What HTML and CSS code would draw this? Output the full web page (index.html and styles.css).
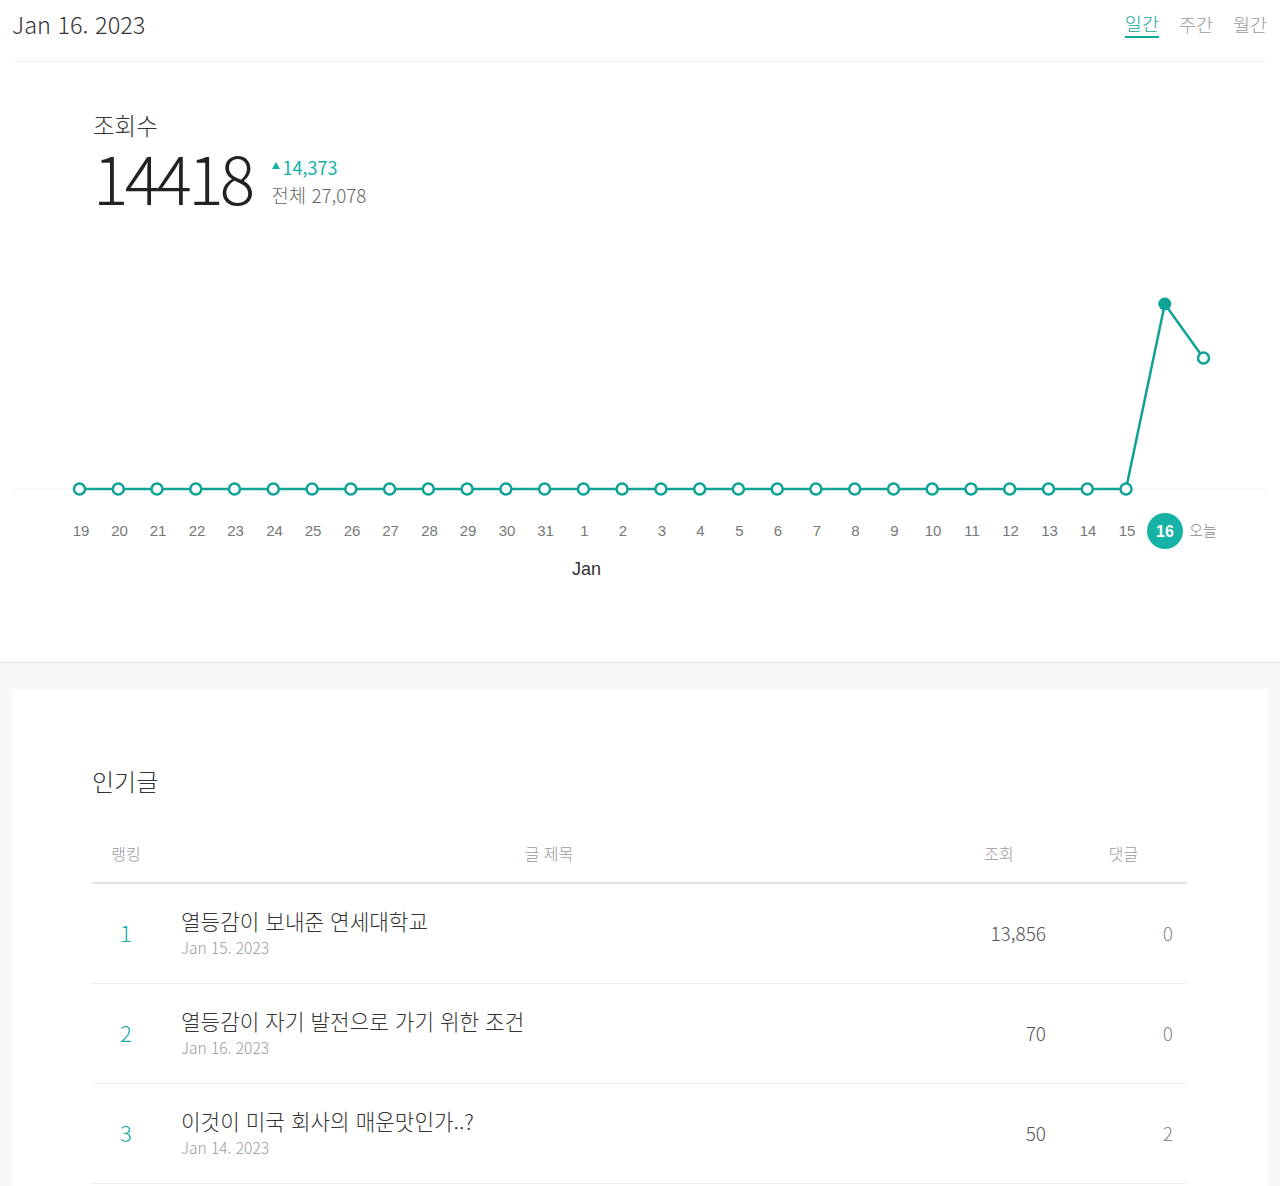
FILE: index.html
```html
<!DOCTYPE html>
<html lang="ko">
<head>
<meta charset="utf-8">
<title>통계</title>
<link rel="stylesheet" href="styles.css">
</head>
<body>
<header class="top">
  <h1 class="date">Jan 16. 2023</h1>
  <nav class="tabs">
    <a class="tab active">일간</a>
    <a class="tab">주간</a>
    <a class="tab">월간</a>
  </nav>
</header>

<section class="visits">
  <div class="stat">
    <div class="stat-label">조회수</div>
    <div class="stat-row">
      <div class="stat-num">14418</div>
      <div class="stat-side">
        <div class="delta"><span class="tri"></span>14,373</div>
        <div class="total">전체 27,078</div>
      </div>
    </div>
  </div>
  <svg class="chart" width="1280" height="320" viewBox="0 0 1280 320">
    <line x1="12" y1="209" x2="1268" y2="209" stroke="#f2f2f2" stroke-width="1"/>
    <polyline fill="none" stroke="#0fa396" stroke-width="2.5" points="79.5,209 1126,209 1164.8,24 1203.5,78"/>
    <g fill="#fff" stroke="#0fa396" stroke-width="2.5">
      <circle cx="79.5" cy="209" r="5.5"/><circle cx="118.3" cy="209" r="5.5"/><circle cx="157" cy="209" r="5.5"/>
      <circle cx="195.8" cy="209" r="5.5"/><circle cx="234.5" cy="209" r="5.5"/><circle cx="273.3" cy="209" r="5.5"/>
      <circle cx="312.1" cy="209" r="5.5"/><circle cx="350.8" cy="209" r="5.5"/><circle cx="389.6" cy="209" r="5.5"/>
      <circle cx="428.3" cy="209" r="5.5"/><circle cx="467.1" cy="209" r="5.5"/><circle cx="505.9" cy="209" r="5.5"/>
      <circle cx="544.6" cy="209" r="5.5"/><circle cx="583.4" cy="209" r="5.5"/><circle cx="622.1" cy="209" r="5.5"/>
      <circle cx="660.9" cy="209" r="5.5"/><circle cx="699.7" cy="209" r="5.5"/><circle cx="738.4" cy="209" r="5.5"/>
      <circle cx="777.2" cy="209" r="5.5"/><circle cx="815.9" cy="209" r="5.5"/><circle cx="854.7" cy="209" r="5.5"/>
      <circle cx="893.5" cy="209" r="5.5"/><circle cx="932.2" cy="209" r="5.5"/><circle cx="971" cy="209" r="5.5"/>
      <circle cx="1009.7" cy="209" r="5.5"/><circle cx="1048.5" cy="209" r="5.5"/><circle cx="1087.3" cy="209" r="5.5"/>
      <circle cx="1126" cy="209" r="5.5"/>
      <circle cx="1203.5" cy="78" r="5.5"/>
    </g>
    <circle cx="1164.8" cy="24" r="6.5" fill="#0fa396"/>
    <g class="axis" text-anchor="middle">
      <text x="81" y="256">19</text><text x="119.5" y="256">20</text><text x="158" y="256">21</text>
      <text x="197" y="256">22</text><text x="235.5" y="256">23</text><text x="274.5" y="256">24</text>
      <text x="313" y="256">25</text><text x="352" y="256">26</text><text x="390.5" y="256">27</text>
      <text x="429.5" y="256">28</text><text x="468" y="256">29</text><text x="507" y="256">30</text>
      <text x="545.5" y="256">31</text><text x="584.5" y="256">1</text><text x="623" y="256">2</text>
      <text x="662" y="256">3</text><text x="700.5" y="256">4</text><text x="739.5" y="256">5</text>
      <text x="778" y="256">6</text><text x="817" y="256">7</text><text x="855.5" y="256">8</text>
      <text x="894.5" y="256">9</text><text x="933" y="256">10</text><text x="972" y="256">11</text>
      <text x="1010.5" y="256">12</text><text x="1049.5" y="256">13</text><text x="1088" y="256">14</text>
      <text x="1127" y="256">15</text>
    </g>
    <circle cx="1165" cy="251" r="18" fill="#17b2a6"/>
    <text class="axis-today-num" x="1165" y="256.5" text-anchor="middle">16</text>
    <text class="axis-today" x="1203" y="256" text-anchor="middle">오늘</text>
    <text class="axis-month" x="586.5" y="295" text-anchor="middle">Jan</text>
  </svg>
</section>

<main class="lower">
  <section class="card">
    <h2 class="card-title">인기글</h2>
    <div class="table">
      <div class="row head">
        <div class="c-rank">랭킹</div>
        <div class="c-head-title">글 제목</div>
        <div class="c-views">조회</div>
        <div class="c-comm">댓글</div>
      </div>
      <div class="row">
        <div class="c-rank rank">1</div>
        <div class="c-title">
          <div class="post">열등감이 보내준 연세대학교</div>
          <div class="post-date">Jan 15. 2023</div>
        </div>
        <div class="c-views num">13,856</div>
        <div class="c-comm num light">0</div>
      </div>
      <div class="row">
        <div class="c-rank rank">2</div>
        <div class="c-title">
          <div class="post">열등감이 자기 발전으로 가기 위한 조건</div>
          <div class="post-date">Jan 16. 2023</div>
        </div>
        <div class="c-views num">70</div>
        <div class="c-comm num light">0</div>
      </div>
      <div class="row">
        <div class="c-rank rank">3</div>
        <div class="c-title">
          <div class="post">이것이 미국 회사의 매운맛인가..?</div>
          <div class="post-date">Jan 14. 2023</div>
        </div>
        <div class="c-views num">50</div>
        <div class="c-comm num light">2</div>
      </div>
    </div>
  </section>
</main>
</body>
</html>
```
FILE: styles.css
```css
* { box-sizing: border-box; }
html, body {
  margin: 0;
  padding: 0;
  background: #f7f7f7;
}
body {
  font-family: "Noto Sans CJK KR", "Noto Sans", sans-serif;
  font-weight: 300;
  color: #333;
}

.top {
  height: 62px;
  padding: 0 12px;
  display: flex;
  justify-content: space-between;
  align-items: flex-start;
  background: #fff;
  position: relative;
}
.top::after {
  content: "";
  position: absolute;
  left: 12px; right: 12px; bottom: 0;
  height: 1px;
  background: #f2f2f2;
}
.date {
  margin: 0;
  padding-top: 7px;
  font-size: 23.5px;
  line-height: 34px;
  font-weight: 300;
  color: #333;
}
.tabs {
  display: flex;
  gap: 20px;
  padding-top: 11px;
  padding-right: 1px;
}
.tab {
  font-size: 18.5px;
  line-height: 26px;
  color: #999;
  font-weight: 300;
}
.tab.active {
  color: #0fa99c;
  border-bottom: 2px solid #0fa99c;
  line-height: 25px;
}

.visits {
  background: #fff;
  border-bottom: 1px solid #e6e6e6;
  padding-top: 49px;
  padding-bottom: 62px;
}
.stat {
  margin-left: 93px;
  height: 169px;
}
.stat-label {
  font-size: 23.5px;
  line-height: 28px;
  color: #333;
}
.stat-row {
  display: flex;
  gap: 20px;
  margin-top: 4px;
}
.stat-num {
  font-size: 66px;
  line-height: 66px;
  font-weight: 300;
  color: #222;
  letter-spacing: -3.6px;
}
.stat-side {
  padding-top: 10px;
  font-size: 18.8px;
  line-height: 28px;
}
.delta {
  color: #11b1a4;
  font-weight: 400;
  font-size: 18px;
  display: flex;
  align-items: center;
  gap: 3px;
}
.tri {
  width: 0; height: 0;
  border-left: 4px solid transparent;
  border-right: 4px solid transparent;
  border-bottom: 7px solid #11b1a4;
  margin-top: -4px;
}
.total { color: #666; }

.chart { display: block; }
.axis text {
  font-family: "Liberation Sans", Arial, sans-serif;
  font-size: 15px;
  fill: #777;
}
.axis-today-num {
  font-family: "Liberation Sans", Arial, sans-serif;
  font-size: 16px;
  font-weight: 700;
  fill: #fff;
}
.axis-today {
  font-family: "Noto Sans CJK KR", sans-serif;
  font-size: 15px;
  fill: #888;
}
.axis-month {
  font-family: "Liberation Sans", Arial, sans-serif;
  font-size: 18px;
  fill: #333;
}

.lower {
  padding: 27px 12px 0;
}
.card {
  background: #fff;
  padding: 76px 81px 40px 80px;
}
.card-title {
  margin: 0 0 30px;
  font-size: 24px;
  line-height: 30px;
  font-weight: 300;
  color: #333;
}
.row {
  display: grid;
  grid-template-columns: 68px 778px 122px 127px;
  align-items: center;
  height: 100px;
  border-bottom: 1px solid #eeeeee;
}
.row.head {
  height: 58px;
  border-bottom: 2px solid #e2e2e2;
  font-size: 16px;
  color: #999;
  padding-bottom: 2px;
}
.row.head > div { text-align: center; }
.rank {
  text-align: center;
  font-size: 22px;
  color: #11aa9e;
  padding-bottom: 3px;
}
.c-title { padding-left: 21px; padding-bottom: 2px; }
.post {
  font-size: 21.3px;
  line-height: 28px;
  color: #333;
}
.post-date {
  font-size: 15.5px;
  line-height: 24px;
  color: #999;
}
.num {
  text-align: right;
  padding-right: 14px;
  padding-bottom: 3px;
  font-size: 19px;
  color: #555;
}
.num.light { color: #888; }
```
